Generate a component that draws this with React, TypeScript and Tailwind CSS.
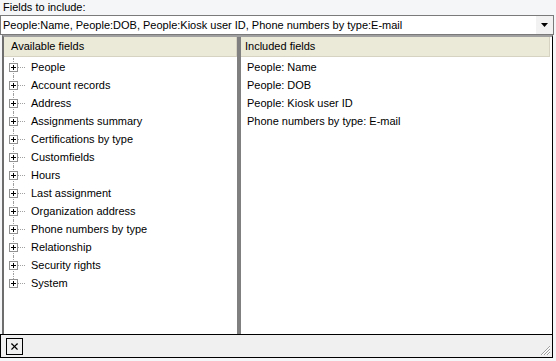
import { X } from 'lucide-react';

const available = [
  'People',
  'Account records',
  'Address',
  'Assignments summary',
  'Certifications by type',
  'Customfields',
  'Hours',
  'Last assignment',
  'Organization address',
  'Phone numbers by type',
  'Relationship',
  'Security rights',
  'System',
];

const included = ['People: Name', 'People: DOB', 'People: Kiosk user ID', 'Phone numbers by type: E-mail'];

function TreeRow({ label, last }: { label: string; last: boolean }) {
  return (
    <div className="relative flex h-[18px] items-center">
      {/* dotted connector */}
      <div
        className={`absolute left-[9px] top-0 border-l border-dotted border-[#a0a0a0] ${last ? 'h-[9px]' : 'h-[18px]'}`}
      />
      <div className="absolute left-[14px] top-[9px] w-[7px] border-t border-dotted border-[#a0a0a0]" />
      <div className="relative ml-[5px] flex h-[9px] w-[9px] items-center justify-center border border-[#919191] bg-white">
        <div className="absolute h-px w-[5px] bg-black" />
        <div className="absolute h-[5px] w-px bg-black" />
      </div>
      <span className="ml-[13px] text-black">{label}</span>
    </div>
  );
}

export default function App() {
  return (
    <div
      className="flex h-[361px] w-[556px] flex-col bg-[#f5f6f7] text-[11px] leading-none text-black"
      style={{ fontFamily: '"Liberation Sans", Arial, sans-serif' }}
    >
      {/* Label */}
      <div className="flex h-[15px] items-center pl-[3px]">Fields to include:</div>

      {/* Combo box */}
      <div className="flex h-[20px] w-[554px] items-center border border-[#7a7a7a] bg-white">
        <span className="flex-1 truncate pl-[2px]">
          People:Name, People:DOB, People:Kiosk user ID, Phone numbers by type:E-mail
        </span>
        <div className="flex h-[18px] w-[17px] items-center justify-center bg-[#f2f2f2]">
          <svg width="8" height="5" viewBox="0 0 8 5">
            <path d="M0 0h7L3.5 4z" fill="#000" />
          </svg>
        </div>
      </div>

      {/* Lists */}
      <div className="ml-[2px] flex h-[299px] w-[551px] border-l-2 border-r border-t-2 border-l-[#6d6d6d] border-r-black border-t-[#a0a0a0] bg-white">
        {/* Available fields */}
        <div className="flex w-[233px] flex-col">
          <div className="flex h-[20px] items-center border-b border-r border-[#d6d3c2] bg-[#ebe9d8] pl-[7px]">
            Available fields
          </div>
          <div className="pt-px">
            {available.map((a, i) => (
              <TreeRow key={a} label={a} last={i === available.length - 1} />
            ))}
          </div>
        </div>

        {/* Splitter */}
        <div className="w-[4px] bg-[#808080]" />

        {/* Included fields */}
        <div className="flex flex-1 flex-col pr-[2px]">
          <div className="flex h-[20px] items-center border-b border-r border-[#d6d3c2] bg-[#ebe9d8] pl-[4px]">
            Included fields
          </div>
          <div className="pt-px">
            {included.map((f) => (
              <div key={f} className="flex h-[18px] items-center pl-[6px]">
                {f}
              </div>
            ))}
          </div>
        </div>
      </div>

      {/* Footer */}
      <div className="relative flex h-[24px] w-[553px] items-center border border-black bg-[#f0f0f0] pl-[5px]">
        <button className="flex h-[17px] w-[17px] items-center justify-center border border-black bg-[#f0f0f0]">
          <X size={11} strokeWidth={2.5} color="#000" />
        </button>
        <svg className="absolute bottom-[1px] right-[1px]" width="11" height="11" viewBox="0 0 11 11">
          <path d="M10 1L1 10M10 4L4 10M10 7L7 10" stroke="#a0a0a0" strokeWidth="1" />
          <path d="M10 2L2 10M10 5L5 10M10 8L8 10" stroke="#ffffff" strokeWidth="1" />
        </svg>
      </div>
    </div>
  );
}
